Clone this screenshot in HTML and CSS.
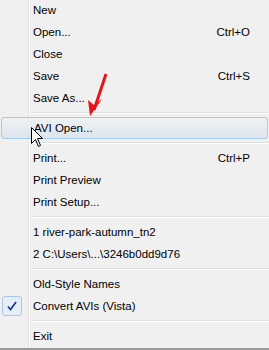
FILE: index.html
```html
<!DOCTYPE html>
<html lang="en">
<head>
    <meta charset="UTF-8">
    <title>File menu</title>
    <link rel="stylesheet" href="styles.css">
</head>
<body>
    <!-- File menu, Vista style -->
    <div class="menu">
        <div class="item"><span class="label">New</span></div>
        <div class="item"><span class="label">Open...</span><span class="key">Ctrl+O</span></div>
        <div class="item"><span class="label">Close</span></div>
        <div class="item"><span class="label">Save</span><span class="key">Ctrl+S</span></div>
        <div class="item"><span class="label">Save As...</span></div>
        <div class="sep"></div>
        <div class="item hot"><span class="label">AVI Open...</span></div>
        <div class="sep"></div>
        <div class="item"><span class="label">Print...</span><span class="key">Ctrl+P</span></div>
        <div class="item"><span class="label">Print Preview</span></div>
        <div class="item"><span class="label">Print Setup...</span></div>
        <div class="sep"></div>
        <div class="item"><span class="label">1 river-park-autumn_tn2</span></div>
        <div class="item"><span class="label">2 C:\Users\...\3246b0dd9d76</span></div>
        <div class="sep"></div>
        <div class="item"><span class="label">Old-Style Names</span></div>
        <div class="item checked">
            <span class="check">
                <svg width="12" height="12" viewBox="0 0 12 12"><path d="M2 6.5 L4.5 9.5 L10 2" fill="none" stroke="#1d3f9a" stroke-width="1.8"/></svg>
            </span>
            <span class="label">Convert AVIs (Vista)</span>
        </div>
        <div class="sep"></div>
        <div class="item"><span class="label">Exit</span></div>

        <!-- red annotation arrow -->
        <svg class="arrow" width="30" height="50" viewBox="0 0 30 50">
            <path d="M22 2 L10 38" stroke="#e8141a" stroke-width="3" fill="none"/>
            <path d="M6 44 L4 28 L10 33 L18 27 Z" fill="#e8141a"/>
        </svg>
        <!-- mouse pointer -->
        <svg class="cursor" width="13" height="21" viewBox="0 0 13 21">
            <path d="M0.5 0.5 L0.5 16.5 L4.5 12.5 L7.5 19.5 L9.5 18.5 L6.5 11.5 L11.5 11.5 Z" fill="#fff" stroke="#000" stroke-width="1"/>
        </svg>
    </div>
</body>
</html>
```

FILE: styles.css
```css
body {
    margin: 0;
    background-color: #f0f0f0;
    font-family: "Liberation Sans", Arial, sans-serif;
    font-size: 11.5px;
    color: #000;
}

.menu {
    position: relative;
    width: 269px;
    margin-top: -1px;
    padding-bottom: 1px;
    border-bottom: 2px solid #9a9a9a;
    /* gutter line left of the labels */
    background: linear-gradient(to right, #f0f0f0 28px, #e2e3e3 28px, #e2e3e3 29px, #fff 29px, #fff 30px, #f0f0f0 30px);
}

.item {
    display: flex;
    align-items: center;
    height: 22px;
    padding: 0 19px 0 33px;
    position: relative;
}

.label {
    flex: 1;
    white-space: nowrap;
}

.key {
    white-space: nowrap;
}

.hot {
    margin: 0 1px;
    height: 20px;
    padding-left: 32px;
    border: 1px solid #a9c9ef;
    border-radius: 3px;
    background: linear-gradient(#edf2f3, #dde5ee);
}

.sep {
    height: 8px;
    margin-left: 30px;
    background: linear-gradient(#f0f0f0 3px, #e0e0e0 3px, #e0e0e0 4px, #fff 4px, #fff 5px, #f0f0f0 5px);
}

.check {
    position: absolute;
    left: 2px;
    top: 1px;
    width: 18px;
    height: 18px;
    border: 1px solid #a8c6ea;
    border-radius: 3px;
    background: #e6eef8;
    display: flex;
    align-items: center;
    justify-content: center;
}

.arrow {
    position: absolute;
    left: 84px;
    top: 73px;
}

.cursor {
    position: absolute;
    left: 31px;
    top: 128px;
}
```
